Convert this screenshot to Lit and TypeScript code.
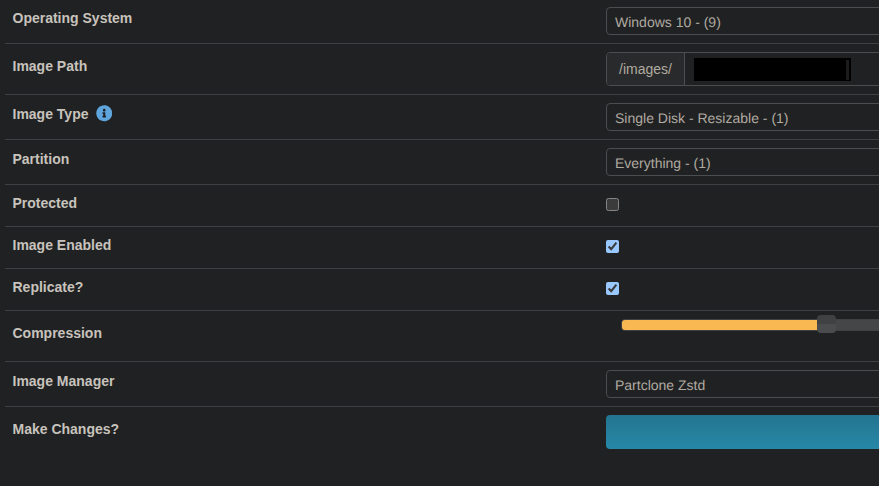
import { LitElement, html, css } from "lit";
import { customElement } from "lit/decorators.js";

@customElement("app-root")
export class AppRoot extends LitElement {
  static styles = css`
    :host {
      display: block;
      width: 879px;
      height: 486px;
      overflow: hidden;
      background: #1f2123;
      color-scheme: dark;
      font-family: "Liberation Sans", Arial, sans-serif;
    }
    .list {
      margin-left: 5px;
      width: 1100px;
    }
    .row {
      display: grid;
      grid-template-columns: 601px 1fr;
      align-items: center;
      padding: 8px 0;
      border-bottom: 1px solid #3d4144;
    }
    .row.first {
      padding-top: 7px;
    }
    .row.check {
      padding: 13px 0 15px;
    }
    .row.last {
      border-bottom: none;
    }
    .label {
      display: flex;
      align-items: center;
      gap: 7px;
      padding-left: 7.5px;
      margin-bottom: 7px;
      font-size: 14px;
      line-height: 16px;
      font-weight: 700;
      color: #c8c3bc;
    }
    .row.check .label {
      margin-top: -12px;
      margin-bottom: -8px;
      height: 16px;
    }
    .info {
      width: 16.5px;
      height: 16.5px;
      display: block;
    }
    .control {
      appearance: none;
      display: block;
      width: 100%;
      height: 28px;
      box-sizing: border-box;
      border: 1px solid #4a4e50;
      border-radius: 4px;
      padding: 2px 8px 0;
      margin: 0;
      outline: none;
      font-family: inherit;
      font-size: 14px;
      text-rendering: geometricPrecision;
      color: #b0aaa0;
      background: #1f2123;
    }
    .group {
      height: 34px;
      box-sizing: border-box;
      border: 1px solid #4a4e50;
      border-radius: 4px;
      display: flex;
      font-size: 14px;
      color: #b0aaa0;
    }
    .addon {
      width: 78px;
      box-sizing: border-box;
      display: flex;
      align-items: center;
      justify-content: center;
      background: #282a2c;
      border-right: 1px solid #4a4e50;
      border-radius: 3px 0 0 3px;
    }
    .field {
      flex: 1;
      display: flex;
      align-items: center;
      padding-left: 9px;
    }
    .redact {
      display: flex;
      justify-content: flex-end;
      box-sizing: border-box;
      width: 157px;
      height: 23px;
      padding: 2px 2px 1px;
      background: #000;
    }
    .slit {
      width: 3px;
      background: #1c1c1c;
    }
    input[type="checkbox"] {
      display: block;
      width: 13px;
      height: 13px;
      margin: 0;
    }
    .slider {
      position: relative;
      height: 34px;
      margin-left: 15px;
    }
    .track {
      display: flex;
      box-sizing: border-box;
      height: 12px;
      background: #444648;
      border: 1px solid #3f4143;
      border-radius: 4px;
      overflow: hidden;
    }
    .fill {
      width: 195px;
      background: #f9b852;
    }
    .thumb {
      position: absolute;
      left: 196px;
      top: -4px;
      width: 19px;
      height: 18px;
      border-radius: 4px;
      background: linear-gradient(#3f4143 50%, #4a4c4e 50%);
    }
    .go {
      height: 34px;
      border-radius: 4px;
      background: linear-gradient(#23748f, #2788a8);
    }
  `;

  private sel(label: string, value: string, cls = "", extra: unknown = "") {
    return html`<div class="row ${cls}">
      <div class="label">${label}${extra}</div>
      <select class="control"><option>${value}</option></select>
    </div>`;
  }

  private chk(label: string, checked: boolean) {
    return html`<div class="row check">
      <div class="label">${label}</div>
      <input type="checkbox" .checked=${checked} />
    </div>`;
  }

  render() {
    const info = html`<svg class="info" viewBox="0 0 512 512">
      <path
        fill="#5fa5dd"
        d="M256 8C119 8 8 119.1 8 256c0 137 111 248 248 248s248-111 248-248C504 119.1 393 8 256 8zm0 110c23.2 0 42 18.8 42 42s-18.8 42-42 42-42-18.8-42-42 18.8-42 42-42zm56 254c0 6.6-5.4 12-12 12h-88c-6.6 0-12-5.4-12-12v-24c0-6.6 5.4-12 12-12h12v-64h-12c-6.6 0-12-5.4-12-12v-24c0-6.6 5.4-12 12-12h64c6.6 0 12 5.4 12 12v100h12c6.6 0 12 5.4 12 12v24z"
      />
    </svg>`;
    return html`<div class="list">
      ${this.sel("Operating System", "Windows 10 - (9)", "first")}
      <div class="row">
        <div class="label">Image Path</div>
        <div class="group">
          <div class="addon">/images/</div>
          <div class="field"><div class="redact"><div class="slit"></div></div></div>
        </div>
      </div>
      ${this.sel("Image Type", "Single Disk - Resizable - (1)", "", info)}
      ${this.sel("Partition", "Everything - (1)")}
      ${this.chk("Protected", false)} ${this.chk("Image Enabled", true)}
      ${this.chk("Replicate?", true)}
      <div class="row">
        <div class="label">Compression</div>
        <div class="slider">
          <div class="track"><div class="fill"></div></div>
          <div class="thumb"></div>
        </div>
      </div>
      ${this.sel("Image Manager", "Partclone Zstd")}
      <div class="row last">
        <div class="label">Make Changes?</div>
        <div class="go"></div>
      </div>
    </div>`;
  }
}
